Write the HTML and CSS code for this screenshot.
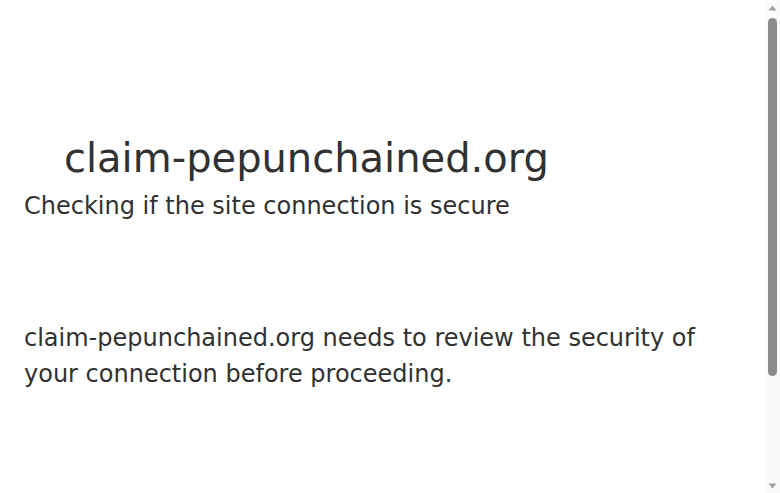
FILE: index.html
```
<!DOCTYPE html>
<html lang="en">
<head>
	<meta charset="utf-8">
	<title>Just a moment...</title>
	<link rel="stylesheet" href="styles.css">
</head>
<body>
	<div class="main-wrapper">
		<div class="main-content">
			<h1 class="h1"><span class="heading-favicon"></span>claim-pepunchained.org</h1>
			<h2 class="h2">Checking if the site connection is secure</h2>
			<div class="core-msg">claim-pepunchained.org needs to review the security of your connection before proceeding.</div>
		</div>
	</div>
	<!-- page scrollbar as it shows in the capture -->
	<div class="scrollbar" aria-hidden="true">
		<div class="scroll-btn">
			<svg width="9" height="6" viewBox="0 0 9 6"><polygon points="4.5,0.5 8.5,5.5 0.5,5.5" fill="#a0a0a0"/></svg>
		</div>
		<div class="scroll-thumb"></div>
		<div class="scroll-track"></div>
		<div class="scroll-btn">
			<svg width="9" height="6" viewBox="0 0 9 6"><polygon points="0.5,0.5 8.5,0.5 4.5,5.5" fill="#a0a0a0"/></svg>
		</div>
	</div>
</body>
</html>
```

FILE: styles.css
```
html, body {
	margin: 0;
	padding: 0;
}
body {
	background-color: #fff;
	color: #313131;
	font-family: "DejaVu Sans", sans-serif;
	padding-right: 15px;
}
.main-wrapper {
	display: flex;
	flex-direction: column;
	align-items: center;
}
.main-content {
	box-sizing: border-box;
	width: 100%;
	max-width: 60rem;
	margin: 8rem auto 0;
	padding: 0 1.5rem;
}
.h1 {
	margin: 0;
	font-size: 2.5rem;
	font-weight: 500;
	line-height: 3.75rem;
}
.heading-favicon {
	display: inline-block;
	width: 2rem;
	height: 2rem;
	margin-right: .5rem;
}
.h2 {
	margin: 0;
	font-size: 1.5rem;
	font-weight: 500;
	line-height: 2.25rem;
}
.core-msg {
	margin-top: 6rem;
	font-size: 1.5rem;
	line-height: 2.25rem;
}
.scrollbar {
	position: fixed;
	top: 0;
	right: 0;
	bottom: 0;
	width: 15px;
	background-color: #fafafa;
	display: flex;
	flex-direction: column;
	align-items: center;
}
.scroll-btn {
	height: 15px;
	width: 15px;
	display: flex;
	align-items: center;
	justify-content: center;
	flex: none;
}
.scroll-btn svg {
	display: block;
}
.scroll-thumb {
	margin-top: 3px;
	width: 9px;
	height: 358px;
	border-radius: 5px;
	background-color: #8b8b8b;
	flex: none;
}
.scroll-track {
	flex: 1;
}
```
